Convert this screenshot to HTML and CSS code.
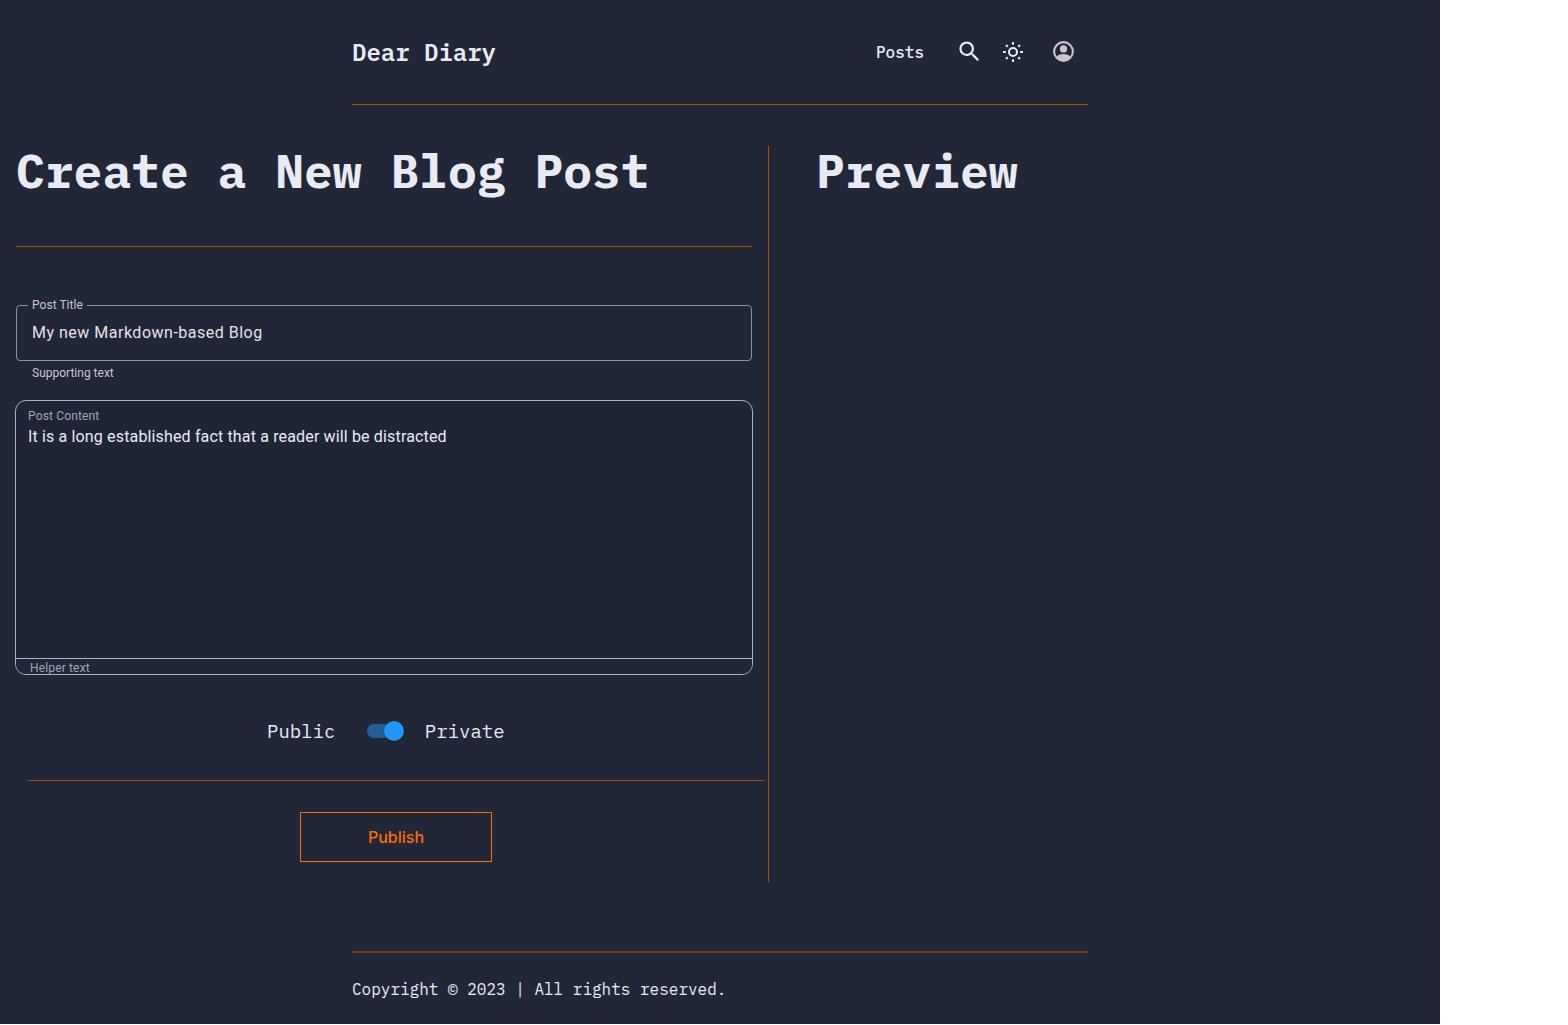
FILE: index.html
```html
<!DOCTYPE html>
<html lang="en">
<head>
<meta charset="utf-8">
<title>Dear Diary</title>
<link rel="stylesheet" href="styles.css">
</head>
<body>
<div class="page">
  <header class="header">
    <div class="brand">Dear Diary</div>
    <nav class="nav">
      <a class="nav-link">Posts</a>
      <svg class="icon icon-search" viewBox="0 0 24 24"><path d="M15.5 14h-.79l-.28-.27A6.47 6.47 0 0 0 16 9.5 6.5 6.5 0 1 0 9.5 16c1.61 0 3.09-.59 4.23-1.57l.27.28v.79l5 4.99L20.49 19l-4.99-5zm-6 0C7.01 14 5 11.99 5 9.5S7.01 5 9.5 5 14 7.01 14 9.5 11.99 14 9.5 14z"/></svg>
      <svg class="icon icon-sun" viewBox="0 0 24 24"><circle cx="12" cy="12" r="4"/><path d="M12 2v2.800M12 19.200v2.800M2 12h2.800M19.200 12h2.800M5 5l1.700 1.700M17.300 17.300l1.700 1.700M5 19l1.700-1.700M17.300 6.700l1.700-1.700"/></svg>
      <svg class="icon icon-user" viewBox="0 0 24 24"><path fill-rule="evenodd" d="M12 2a10 10 0 1 0 0 20 10 10 0 0 0 0-20zM5.600 16.900A8 8 0 1 1 18.400 16.900C16.900 15.200 14.500 14.500 12 14.500S7.100 15.200 5.600 16.900z"/><circle cx="12" cy="9.500" r="3.500"/></svg>
    </nav>
  </header>
  <main class="main">
    <section class="editor">
      <h1 class="title">Create a New Blog Post</h1>
      <div class="rule"></div>
      <div class="field"><label class="field-label">Post Title</label><span>My new Markdown-based Blog</span></div>
      <div class="support">Supporting text</div>
      <div class="area">
        <div class="area-body">
          <div class="area-label">Post Content</div>
          <div class="area-text">It is a long established fact that a reader will be distracted</div>
        </div>
        <div class="helper">Helper text</div>
      </div>
      <div class="visibility">
        <span>Public</span>
        <span class="switch"><span class="knob"></span></span>
        <span>Private</span>
      </div>
      <div class="rule rule-shifted"></div>
      <button class="publish">Publish</button>
    </section>
    <section class="preview"><h1 class="title">Preview</h1></section>
  </main>
  <footer class="footer">Copyright © 2023 | All rights reserved.</footer>
</div>
</body>
</html>
```
FILE: styles.css
```css
* { box-sizing: border-box; }
body { margin: 0; background: #fff; }
.page {
  width: 1440px;
  height: 1024px;
  background: #222737;
  color: #e8ebf4;
  font-family: "IBM Plex Mono", "Liberation Mono", monospace;
}
.header {
  width: 736px;
  height: 105px;
  margin: 0 auto;
  border-bottom: 1px solid #ac4b06;
  display: flex;
  justify-content: space-between;
}
.brand { font-size: 24px; font-weight: 600; line-height: 32px; padding-top: 36px; }
.nav { display: flex; align-items: flex-start; padding: 39px 12px 0 0; }
.nav-link { font-size: 16px; font-weight: 500; line-height: 24px; padding-top: 1px; margin-right: 32px; }
.icon { display: block; width: 24px; height: 24px; fill: #e8ebf4; }
.icon-search { width: 27px; height: 27px; margin: -1.5px 18.5px 0 0; }
.icon-sun { fill: none; stroke: #e8ebf4; stroke-width: 2; margin: 1px 26.5px 0 -1px; }
.icon-user { fill: #cac4d0; width: 25px; height: 25px; }
.main { display: flex; height: 736px; margin-top: 41px; }
.editor { width: 768px; padding: 0 16px; }
.preview { flex: 1; border-left: 1px solid #ac4b06; padding-left: 47px; }
.title { margin: 0; font-size: 48px; font-weight: 700; line-height: 48px; white-space: nowrap; }
.rule { height: 1px; background: #ac4b06; margin-top: 52px; }
.field {
  position: relative;
  height: 56px;
  margin-top: 58px;
  padding: 0 15px;
  border: 1px solid #938f99;
  border-radius: 4px;
  color: #e6e1e5;
  font: 16px/54px Roboto, sans-serif;
  letter-spacing: .5px;
}
.field-label {
  position: absolute;
  left: 11px;
  top: -9px;
  padding: 0 4px;
  background: #222737;
  color: #cac4d0;
  font-size: 12px;
  line-height: 16px;
  letter-spacing: .04px;
}
.support { padding: 4px 16px 0; color: #cac4d0; font: 12px/16px Roboto, sans-serif; letter-spacing: 0; }
.area {
  height: 275px;
  margin: 19px -1px 0;
  border: 1px solid #a9b0c2;
  border-radius: 11px;
  overflow: hidden;
  background: #202536;
  font-family: Roboto, sans-serif;
}
.area-body { height: 258px; padding: 7px 12px; border-bottom: 1px solid #a9b0c2; }
.area-label { color: #a0a6b5; font-size: 12px; line-height: 16px; letter-spacing: .15px; }
.area-text { margin-top: 1px; font-size: 16px; line-height: 24px; letter-spacing: .15px; }
.helper { padding: 1px 14px; color: #a0a6b5; background: #222737; font-size: 12px; line-height: 16px; letter-spacing: .15px; }
.visibility { display: flex; align-items: center; height: 24px; margin: 44px 0 0 251px; font-size: 19px; line-height: 24px; }
.switch { position: relative; width: 34px; height: 14px; margin: 0 23.4px 0 32px; border-radius: 7px; background: #225f97; }
.knob { position: absolute; right: -3px; top: -3px; width: 20px; height: 20px; border-radius: 50%; background: #2196f3; box-shadow: 0 1px 2px rgba(0, 0, 0, .3); }
.rule-shifted { margin: 37px -12px 0 12px; }
.publish {
  display: block;
  width: 192px;
  height: 50px;
  margin: 31px 0 0 284px;
  padding: 0;
  border: 1px solid #ff6c00;
  background: none;
  color: #ff6c00;
  font: 500 16px/24px Inter, sans-serif;
}
.footer {
  width: 736px;
  margin: 69px auto 0;
  padding-top: 24px;
  border-top: 2px solid #6d3a1e;
  font-size: 16px;
  line-height: 24px;
}
```
